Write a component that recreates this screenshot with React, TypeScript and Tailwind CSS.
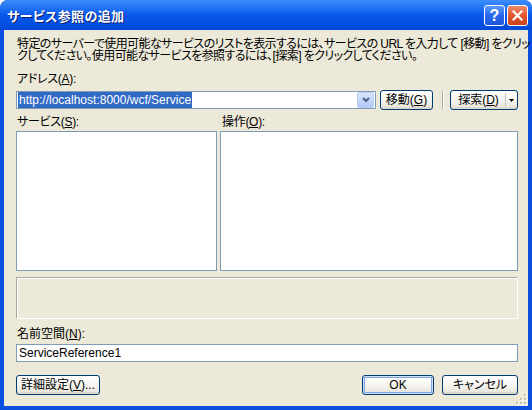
import React from "react";

const ui =
  "font-['Liberation_Sans','Noto_Sans_CJK_JP',sans-serif] [font-feature-settings:'palt'] text-[12px] leading-[12px] text-black";

function XpButton({
  children,
  className = "",
  isDefault = false,
}: {
  children: React.ReactNode;
  className?: string;
  isDefault?: boolean;
}) {
  return (
    <div
      className={`h-[20px] rounded-[3px] border border-[#003C74] bg-linear-to-b from-white via-[#F6F5F1] to-[#E3E1D6] flex items-center justify-center ${
        isDefault
          ? "shadow-[inset_0_0_0_1px_#CEE0F9,inset_0_0_0_2px_#7FA5E5]"
          : "shadow-[inset_0_-2px_0_#DCD8CB]"
      } ${className}`}
    >
      {children}
    </div>
  );
}

export default function App() {
  return (
    <div className={`w-[532px] h-[410px] bg-white ${ui}`}>
      <div className="h-full flex flex-col rounded-t-[8px] overflow-hidden bg-[#0A4FE0]">
        {/* title bar */}
        <div className="h-[30px] shrink-0 flex items-center pl-[7px] pr-[4px] bg-linear-to-b from-[#3B8EF8] via-[#0758EC] to-[#0349D8]">
          <span className="flex-1 text-white font-bold text-[13px] leading-[13px] tracking-[0.4px] pt-[3px] [text-shadow:1px_1px_0_#0A1E6E]">
            サービス参照の追加
          </span>
          <div className="flex gap-[2px] pt-[1px]">
            <div className="w-[21px] h-[21px] rounded-[3px] border border-white bg-linear-to-b from-[#5C9AF8] via-[#2A68EE] to-[#1C55DA] flex items-center justify-center text-white font-bold text-[16px] leading-[16px] font-['Liberation_Sans',sans-serif]">
              ?
            </div>
            <div className="w-[21px] h-[21px] rounded-[3px] border border-white bg-linear-to-b from-[#EE8A6A] via-[#E2552C] to-[#C8401A] flex items-center justify-center">
              <svg width="11" height="11" viewBox="0 0 11 11">
                <path d="M1.5 1.5 L9.5 9.5 M9.5 1.5 L1.5 9.5" stroke="white" strokeWidth="2.2" strokeLinecap="square" />
              </svg>
            </div>
          </div>
        </div>

        {/* body */}
        <div className="flex-1 ml-[4px] mr-[4px] mb-[4px] bg-[#ECE9D8] pl-[12px] pr-[10px] pt-[8px] flex flex-col relative">
          <div className="whitespace-nowrap pl-[1px] tracking-[-0.6px]">
            <div className="h-[12px]">特定のサーバーで使用可能なサービスのリストを表示するには、サービスの URL を入力して [移動] をクリッ</div>
            <div className="h-[12px]">クしてください。使用可能なサービスを参照するには、[探索] をクリックしてください。</div>
          </div>

          <div className="mt-[11px] pl-[1px] tracking-[-0.3px]">
            アドレス(<span className="underline">A</span>):
          </div>
          <div className="mt-[5px] flex items-center h-[20px]">
            <div className="w-[360px] h-[18px] border border-[#7F9DB9] bg-white flex items-center pl-[1px] pr-[1px]">
              <div className="flex-1">
                <span className="bg-[#316AC5] text-white px-[1px] py-[1px] font-['Liberation_Sans',sans-serif]">
                  http://localhost:8000/wcf/Service
                </span>
              </div>
              <div className="w-[17px] h-[16px] rounded-[2px] bg-linear-to-b from-[#D9E5FD] to-[#B3CAF5] border border-[#B9CDF5] flex items-center justify-center">
                <svg width="8" height="6" viewBox="0 0 8 6">
                  <path d="M1 1 L4 4 L7 1" stroke="#4D6185" strokeWidth="2" fill="none" />
                </svg>
              </div>
            </div>
            <XpButton className="ml-[4px] w-[53px]">
              移動(<span className="underline">G</span>)
            </XpButton>
            <div className="ml-[9px] w-[2px] h-[18px] border-l border-[#ACA899] bg-white" />
            <XpButton className="ml-[6px] w-[68px] justify-start">
              <span className="w-[54px] text-center pl-[1px]">
                探索(<span className="underline">D</span>)
              </span>
              <div className="w-px h-[14px] bg-[#C9C5B6]" />
              <div className="flex-1 flex justify-center">
                <svg width="5" height="3" viewBox="0 0 5 3">
                  <path d="M0 0 H5 L2.5 3 Z" fill="black" />
                </svg>
              </div>
            </XpButton>
          </div>

          <div className="mt-[6px] flex tracking-[-0.3px]">
            <div className="w-[204px] pl-[1px]">
              サービス(<span className="underline">S</span>):
            </div>
            <div className="pl-[2px]">
              操作(<span className="underline">O</span>):
            </div>
          </div>
          <div className="mt-[3px] flex gap-[3px]">
            <div className="w-[201px] h-[140px] border border-[#7F9DB9] bg-white" />
            <div className="flex-1 h-[140px] border border-[#7F9DB9] bg-white" />
          </div>

          <div className="mt-[6px] h-[42px] border border-t-[#ACA899] border-l-[#ACA899] border-b-white border-r-white shadow-[inset_1px_1px_0_#FFFFFF]" />

          <div className="mt-[9px] pl-[1px]">
            名前空間(<span className="underline">N</span>):
          </div>
          <div className="mt-[4px] h-[18px] border border-[#7F9DB9] bg-white flex items-center pl-[2px] font-['Liberation_Sans',sans-serif]">
            ServiceReference1
          </div>

          <div className="mt-[13px] flex">
            <XpButton className="w-[84px]">
              詳細設定(<span className="underline">V</span>)...
            </XpButton>
            <div className="flex-1" />
            <XpButton isDefault className="w-[72px] font-['Liberation_Sans',sans-serif]">
              OK
            </XpButton>
            <XpButton className="ml-[8px] w-[76px]">キャンセル</XpButton>
          </div>

          <svg className="absolute right-[1px] bottom-[1px]" width="11" height="11" viewBox="0 0 11 11">
            {[
              [8, 0],
              [4, 4],
              [8, 4],
              [0, 8],
              [4, 8],
              [8, 8],
            ].map(([x, y], i) => (
              <g key={i}>
                <rect x={x + 1} y={y + 1} width="2" height="2" fill="white" />
                <rect x={x} y={y} width="2" height="2" fill="#C4C0AE" />
              </g>
            ))}
          </svg>
        </div>
      </div>
    </div>
  );
}
